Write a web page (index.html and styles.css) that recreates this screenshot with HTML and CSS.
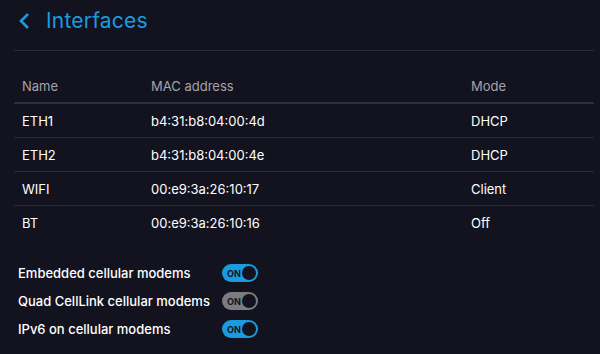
FILE: index.html
```html
<!DOCTYPE html>
<html lang="en">
  <head>
    <meta charset="UTF-8" />
    <title>Interfaces</title>
    <link rel="stylesheet" href="styles.css">
  </head>
  <body>
    <div class="page">
      <div class="header">
        <svg class="back" width="14" height="18" viewBox="0 0 14 18">
          <path d="M11 2 L4 9 L11 16" fill="none" stroke="#1a9be0" stroke-width="2.6" />
        </svg>
        <h1>Interfaces</h1>
      </div>
      <div class="table">
        <div class="row head">
          <div>Name</div>
          <div>MAC address</div>
          <div>Mode</div>
        </div>
        <div class="row">
          <div>ETH1</div>
          <div>b4:31:b8:04:00:4d</div>
          <div>DHCP</div>
        </div>
        <div class="row">
          <div>ETH2</div>
          <div>b4:31:b8:04:00:4e</div>
          <div>DHCP</div>
        </div>
        <div class="row">
          <div>WIFI</div>
          <div>00:e9:3a:26:10:17</div>
          <div>Client</div>
        </div>
        <div class="row">
          <div>BT</div>
          <div>00:e9:3a:26:10:16</div>
          <div>Off</div>
        </div>
      </div>
      <div class="settings">
        <div class="setting">
          <span class="label">Embedded cellular modems</span>
          <span class="toggle on"><span class="txt">ON</span><span class="knob"></span></span>
        </div>
        <div class="setting">
          <span class="label">Quad CellLink cellular modems</span>
          <span class="toggle off"><span class="txt">ON</span><span class="knob"></span></span>
        </div>
        <div class="setting">
          <span class="label">IPv6 on cellular modems</span>
          <span class="toggle on"><span class="txt">ON</span><span class="knob"></span></span>
        </div>
      </div>
    </div>
  </body>
</html>
```

FILE: styles.css
```css
body {
  margin: 0;
  background-color: #13131f;
  font-family: Inter, "Noto Sans", sans-serif;
  color: #ffffff;
  height: 354px;
  overflow: hidden;
}
.page {
  padding: 0 6px 0 14px;
}
.header {
  display: flex;
  align-items: center;
  height: 51px;
  border-bottom: 1px solid #2c2c38;
  box-sizing: border-box;
  padding-bottom: 9px;
}
.back {
  margin-left: 3px;
  margin-right: 15px;
}
h1 {
  margin: 0;
  font-weight: 400;
  font-size: 21px;
  color: #1a9be0;
  letter-spacing: 0.2px;
}
.table {
  margin-top: 18px;
}
.row {
  display: grid;
  grid-template-columns: 129px 320px 1fr;
  height: 34px;
  align-items: center;
  font-size: 13px;
  border-bottom: 1px solid #2a2a36;
  box-sizing: border-box;
}
.row div {
  padding-left: 8px;
}
.row.head {
  color: #a3a3ab;
  height: 35px;
  border-bottom: 2px solid #2e2e3a;
}
.row:last-child {
  border-bottom: none;
}
.settings {
  margin-top: 19px;
  padding-left: 4px;
}
.setting {
  display: flex;
  align-items: center;
  height: 28px;
  font-size: 13px;
  font-weight: 500;
}
.label {
  width: 204px;
}
.toggle {
  display: flex;
  align-items: center;
  justify-content: space-between;
  width: 36px;
  height: 18px;
  border-radius: 9px;
  box-sizing: border-box;
  padding: 0 2px 0 5px;
}
.toggle.on {
  background-color: #1a9be0;
}
.toggle.off {
  background-color: #7b7b80;
}
.txt {
  font-size: 9px;
  font-weight: 700;
  color: #13131f;
}
.knob {
  width: 14px;
  height: 14px;
  border-radius: 50%;
  background-color: #13131f;
}
```
